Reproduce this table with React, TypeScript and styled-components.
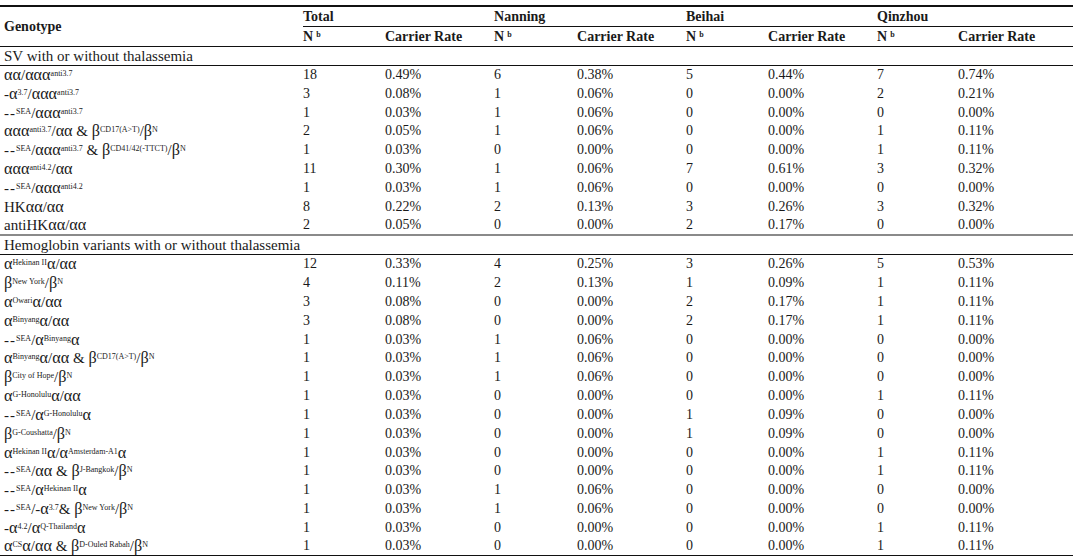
import * as React from 'react'
import styled, { createGlobalStyle } from 'styled-components'

const GlobalStyle = createGlobalStyle`
  html, body {
    margin: 0;
    padding: 0;
    background: #fff;
  }
  body {
    font-family: "Liberation Serif", "Times New Roman", serif;
    color: #1a1a1a;
  }
`

const Page = styled.div`
  padding-top: 5px;
  width: 1080px;
`

const Table = styled.table`
  width: 1073px;
  border-collapse: collapse;
  table-layout: fixed;
  border-top: 2px solid #111;
  border-bottom: 2px solid #111;
`

const HeadCell = styled.th<{ $group?: boolean; $first?: boolean }>`
  font-weight: bold;
  font-size: 14px;
  text-align: left;
  vertical-align: middle;
  padding: 0 0 0 ${p => (p.$first ? '4px' : '0')};
  height: 19px;
  line-height: 19px;
  border-bottom: ${p => (p.$group ? '1px solid #111' : 'none')};
  white-space: nowrap;
`

const Nsup = styled.sup`
  font-size: 8px;
  line-height: 0;
  margin-left: 3px;
  vertical-align: 4px;
`

const BodyRow = styled.tr`
  height: 18.85px;
`

const SectionRow = styled.tr<{ $heavy?: boolean }>`
  height: 19px;
  border-top: ${p => (p.$heavy ? '2px solid #8a8a8a' : '1px solid #111')};
  border-bottom: 1px solid #111;
`

const SectionCell = styled.td`
  font-size: 15px;
  padding: 0 0 0 4px;
  line-height: 18px;
  white-space: nowrap;
`

const GenoCell = styled.td`
  font-size: 15px;
  padding: 0 0 0 4px;
  line-height: 18px;
  white-space: nowrap;
`

const NumCell = styled.td`
  font-size: 14px;
  padding: 0;
  line-height: 18px;
  white-space: nowrap;
`

const G = styled.span`
  font-size: 1.08em;
`

const S = styled.sup`
  font-size: 8px;
  line-height: 0;
  vertical-align: 4px;
`

const Dash = styled.span`
  letter-spacing: 1px;
`

type Row = { geno: React.ReactNode; v: string[] }

const sea = <><Dash>--</Dash><S>SEA</S></>
const bN = <><G>β</G><S>N</S></>

const svRows: Row[] = [
  { geno: <><G>αα</G>/<G>ααα</G><S>anti3.7</S></>, v: ['18', '0.49%', '6', '0.38%', '5', '0.44%', '7', '0.74%'] },
  { geno: <>-<G>α</G><S>3.7</S>/<G>ααα</G><S>anti3.7</S></>, v: ['3', '0.08%', '1', '0.06%', '0', '0.00%', '2', '0.21%'] },
  { geno: <>{sea}/<G>ααα</G><S>anti3.7</S></>, v: ['1', '0.03%', '1', '0.06%', '0', '0.00%', '0', '0.00%'] },
  { geno: <><G>ααα</G><S>anti3.7</S>/<G>αα</G> &amp; <G>β</G><S>CD17(A&gt;T)</S>/{bN}</>, v: ['2', '0.05%', '1', '0.06%', '0', '0.00%', '1', '0.11%'] },
  { geno: <>{sea}/<G>ααα</G><S>anti3.7</S> &amp; <G>β</G><S>CD41/42(-TTCT)</S>/{bN}</>, v: ['1', '0.03%', '0', '0.00%', '0', '0.00%', '1', '0.11%'] },
  { geno: <><G>ααα</G><S>anti4.2</S>/<G>αα</G></>, v: ['11', '0.30%', '1', '0.06%', '7', '0.61%', '3', '0.32%'] },
  { geno: <>{sea}/<G>ααα</G><S>anti4.2</S></>, v: ['1', '0.03%', '1', '0.06%', '0', '0.00%', '0', '0.00%'] },
  { geno: <>HK<G>αα</G>/<G>αα</G></>, v: ['8', '0.22%', '2', '0.13%', '3', '0.26%', '3', '0.32%'] },
  { geno: <>antiHK<G>αα</G>/<G>αα</G></>, v: ['2', '0.05%', '0', '0.00%', '2', '0.17%', '0', '0.00%'] },
]

const hbRows: Row[] = [
  { geno: <><G>α</G><S>Hekinan II</S><G>α</G>/<G>αα</G></>, v: ['12', '0.33%', '4', '0.25%', '3', '0.26%', '5', '0.53%'] },
  { geno: <><G>β</G><S>New York</S>/{bN}</>, v: ['4', '0.11%', '2', '0.13%', '1', '0.09%', '1', '0.11%'] },
  { geno: <><G>α</G><S>Owari</S><G>α</G>/<G>αα</G></>, v: ['3', '0.08%', '0', '0.00%', '2', '0.17%', '1', '0.11%'] },
  { geno: <><G>α</G><S>Binyang</S><G>α</G>/<G>αα</G></>, v: ['3', '0.08%', '0', '0.00%', '2', '0.17%', '1', '0.11%'] },
  { geno: <>{sea}/<G>α</G><S>Binyang</S><G>α</G></>, v: ['1', '0.03%', '1', '0.06%', '0', '0.00%', '0', '0.00%'] },
  { geno: <><G>α</G><S>Binyang</S><G>α</G>/<G>αα</G> &amp; <G>β</G><S>CD17(A&gt;T)</S>/{bN}</>, v: ['1', '0.03%', '1', '0.06%', '0', '0.00%', '0', '0.00%'] },
  { geno: <><G>β</G><S>City of Hope</S>/{bN}</>, v: ['1', '0.03%', '1', '0.06%', '0', '0.00%', '0', '0.00%'] },
  { geno: <><G>α</G><S>G-Honolulu</S><G>α</G>/<G>αα</G></>, v: ['1', '0.03%', '0', '0.00%', '0', '0.00%', '1', '0.11%'] },
  { geno: <>{sea}/<G>α</G><S>G-Honolulu</S><G>α</G></>, v: ['1', '0.03%', '0', '0.00%', '1', '0.09%', '0', '0.00%'] },
  { geno: <><G>β</G><S>G-Coushatta</S>/{bN}</>, v: ['1', '0.03%', '0', '0.00%', '1', '0.09%', '0', '0.00%'] },
  { geno: <><G>α</G><S>Hekinan II</S><G>α</G>/<G>α</G><S>Amsterdam-A1</S><G>α</G></>, v: ['1', '0.03%', '0', '0.00%', '0', '0.00%', '1', '0.11%'] },
  { geno: <>{sea}/<G>αα</G> &amp; <G>β</G><S>J-Bangkok</S>/{bN}</>, v: ['1', '0.03%', '0', '0.00%', '0', '0.00%', '1', '0.11%'] },
  { geno: <>{sea}/<G>α</G><S>Hekinan II</S><G>α</G></>, v: ['1', '0.03%', '1', '0.06%', '0', '0.00%', '0', '0.00%'] },
  { geno: <>{sea}/-<G>α</G><S>3.7</S>&amp; <G>β</G><S>New York</S>/{bN}</>, v: ['1', '0.03%', '1', '0.06%', '0', '0.00%', '0', '0.00%'] },
  { geno: <>-<G>α</G><S>4.2</S>/<G>α</G><S>Q-Thailand</S><G>α</G></>, v: ['1', '0.03%', '0', '0.00%', '0', '0.00%', '1', '0.11%'] },
  { geno: <><G>α</G><S>CS</S><G>α</G>/<G>αα</G> &amp; <G>β</G><S>D-Ouled Rabah</S>/{bN}</>, v: ['1', '0.03%', '0', '0.00%', '0', '0.00%', '1', '0.11%'] },
]

const colWidths = [303, 82, 109, 83, 109, 82, 109, 81, 115]
const regions = ['Total', 'Nanning', 'Beihai', 'Qinzhou']

function DataRows({ rows }: { rows: Row[] }) {
  return (
    <>
      {rows.map((r, i) => (
        <BodyRow key={i}>
          <GenoCell>{r.geno}</GenoCell>
          {r.v.map((val, j) => (
            <NumCell key={j}>{val}</NumCell>
          ))}
        </BodyRow>
      ))}
    </>
  )
}

export default function App() {
  return (
    <Page>
      <GlobalStyle />
      <Table>
        <colgroup>
          {colWidths.map((w, i) => (
            <col key={i} style={{ width: w }} />
          ))}
        </colgroup>
        <thead>
          <tr>
            <HeadCell $first rowSpan={2}>Genotype</HeadCell>
            {regions.map(r => (
              <HeadCell key={r} colSpan={2} $group>{r}</HeadCell>
            ))}
          </tr>
          <tr>
            {regions.map(r => (
              <React.Fragment key={r}>
                <HeadCell>N<Nsup>b</Nsup></HeadCell>
                <HeadCell>Carrier Rate</HeadCell>
              </React.Fragment>
            ))}
          </tr>
        </thead>
        <tbody>
          <SectionRow>
            <SectionCell colSpan={9}>SV with or without thalassemia</SectionCell>
          </SectionRow>
          <DataRows rows={svRows} />
          <SectionRow $heavy>
            <SectionCell colSpan={9}>Hemoglobin variants with or without thalassemia</SectionCell>
          </SectionRow>
          <DataRows rows={hbRows} />
        </tbody>
      </Table>
    </Page>
  )
}
